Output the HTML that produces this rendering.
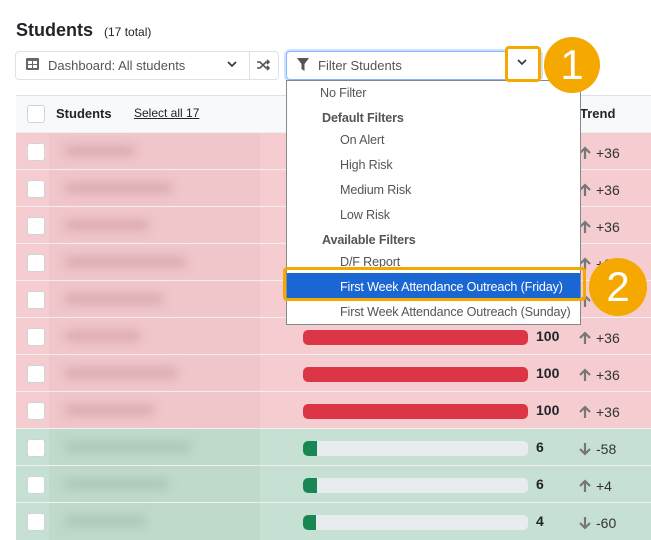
<!DOCTYPE html>
<html><head><style>
body{margin:0;width:651px;height:532px;overflow:hidden;background:#fff;font-family:"Liberation Sans",sans-serif;position:relative;color:#212529}
.a{position:absolute}
.cb{position:absolute;left:27px;width:16px;height:16px;background:#fff;border:1px solid #d0d4d8;border-radius:3px}
.row{position:absolute;left:16px;width:640px;height:36px;border-top:1px solid #f0f0f0}
.bar{position:absolute;left:303px;width:225px;height:15px;border-radius:5px;background:#e9ecef;overflow:hidden}
.sc{position:absolute;left:536px;font-weight:bold;font-size:14px}
.tr{position:absolute;left:579px;font-size:14px;color:#333}
.tr svg{vertical-align:-2px;margin-right:5px}
.it{position:absolute;font-size:12.6px;letter-spacing:-0.15px;color:#555;white-space:nowrap;line-height:16px}
</style></head><body>
<div class="a" style="left:16px;top:20px;font-size:18px;font-weight:bold">Students <span style="font-size:12px;font-weight:normal;margin-left:6px">(17 total)</span></div>
<div class="a" style="left:15px;top:51px;width:262px;height:27px;border:1px solid #dee2e6;border-radius:4px"></div>
<div class="a" style="left:249px;top:52px;width:1px;height:27px;background:#dee2e6"></div>
<svg class="a" style="left:26px;top:58px" width="13" height="12"><rect x="0" y="0" width="13" height="12" rx="1" fill="#666"/><rect x="2" y="3" width="4" height="3" fill="#fff"/><rect x="7" y="3" width="4" height="3" fill="#fff"/><rect x="2" y="7" width="4" height="3" fill="#fff"/><rect x="7" y="7" width="4" height="3" fill="#fff"/></svg>
<div class="a" style="left:48px;top:58px;font-size:13px;color:#555">Dashboard: All students</div>
<svg class="a" style="left:227px;top:61px" width="10" height="7"><path d="M1 1l4 4 4-4" stroke="#333" stroke-width="1.6" fill="none"/></svg>
<svg class="a" style="left:257px;top:59px" width="13" height="12"><path d="M0 3h3l6 6h3M0 9h3l6-6h3M10 1l2 2-2 2M10 7l2 2-2 2" stroke="#555" stroke-width="1.6" fill="none"/></svg>
<div class="a" style="left:16px;top:95px;width:640px;height:37px;background:#f8f9fa;border-top:1px solid #dee2e6"></div>
<div class="cb" style="top:105px"></div>
<div class="a" style="left:56px;top:106px;font-size:13px;font-weight:bold">Students</div>
<div class="a" style="left:134px;top:106px;font-size:12px;text-decoration:underline">Select all 17</div>
<div class="a" style="left:580px;top:106px;font-size:13px;font-weight:bold">Trend</div>
<div id="rows"></div>
<script>
var up='<svg width="12" height="14"><path d="M6 13V2M1 7L6 2l5 5" stroke="#777" stroke-width="2.2" fill="none"/></svg>';
var dn='<svg width="12" height="14"><path d="M6 1v11M1 7l5 5 5-5" stroke="#777" stroke-width="2.2" fill="none"/></svg>';
var data=[[36,'+36',1,100],[36,'+36',1,100],[36,'+36',1,100],[36,'+36',1,100],[36,'+36',1,100],[36,'+36',1,100],[36,'+36',1,100],[36,'+36',1,100],[-58,'-58',0,6],[4,'+4',0,6],[-60,'-60',0,4]];
var h='';
for(var i=0;i<data.length;i++){var t=133+i*37,d=data[i],bg=d[2]?'#f5cdd1':'#c6e1d4';
h+='<div class="row" style="top:'+(t-1)+'px;height:37px;background:'+bg+'"></div>';
h+='<div class="cb" style="top:'+(t+10)+'px"></div>';
h+='<div class="a" style="left:49px;top:'+t+'px;width:211px;height:37px;background:'+(d[2]?'#f0c6ca':'#bfd9cb')+'"></div>';
h+='<div class="a" style="left:65px;top:'+(t+13)+'px;width:'+(70+(i*37)%60)+'px;height:10px;background:'+(d[2]?'#d9a9ae':'#a8c6b6')+';filter:blur(5px)"></div>';
h+='<div class="bar" style="top:'+(t+12)+'px"><div style="height:15px;width:'+(d[3]*2.25)+'px;min-width:13px;background:'+(d[2]?'#dc3545':'#198754')+'"></div></div>';
h+='<div class="sc" style="top:'+(t+10)+'px">'+d[3]+'</div>';
h+='<div class="tr" style="top:'+(t+12)+'px">'+(d[0]>0?up:dn)+d[1]+'</div>';}
document.getElementById('rows').innerHTML=h;
</script>
<div class="a" style="left:286px;top:51px;width:253px;height:27px;border:1px solid #86b7fe;border-radius:4px;background:#fff;box-shadow:0 0 0 2px #cfe2ff"></div>
<svg class="a" style="left:297px;top:58px" width="12" height="13"><path d="M0 0h12L7.5 6v7L4.5 11V6z" fill="#555"/></svg>
<div class="a" style="left:318px;top:58px;font-size:13px;color:#555">Filter Students</div>
<div class="a" style="left:286px;top:80px;width:293px;height:243px;border:1px solid #888;background:#fff"></div>
<div class="a" style="left:287px;top:273px;width:293px;height:27px;background:#1a66d2"></div>
<div class="it" style="left:320px;top:85px">No Filter</div>
<div class="it" style="left:322px;top:110px;font-weight:bold">Default Filters</div>
<div class="it" style="left:340px;top:132px">On Alert</div>
<div class="it" style="left:340px;top:157px">High Risk</div>
<div class="it" style="left:340px;top:182px">Medium Risk</div>
<div class="it" style="left:340px;top:207px">Low Risk</div>
<div class="it" style="left:322px;top:232px;font-weight:bold">Available Filters</div>
<div class="it" style="left:340px;top:254px">D/F Report</div>
<div class="it" style="left:340px;top:279px;color:#fff">First Week Attendance Outreach (Friday)</div>
<div class="it" style="left:340px;top:304px">First Week Attendance Outreach (Sunday)</div>
<div class="a" style="left:505px;top:46px;width:30px;height:30px;border:3px solid #f5a800;border-radius:4px;background:#fff"></div>
<svg class="a" style="left:517px;top:59px" width="10" height="7"><path d="M1 1l4 4 4-4" stroke="#333" stroke-width="1.6" fill="none"/></svg>
<div class="a" style="left:283px;top:267px;width:297px;height:28px;border:3px solid #f5a800;border-radius:4px"></div>
<div class="a" style="left:544px;top:37px;width:56px;height:56px;border-radius:50%;background:#f5a800;color:#fff;font-size:42px;text-align:center;line-height:56px">1</div>
<div class="a" style="left:589px;top:258px;width:58px;height:58px;border-radius:50%;background:#f5a800;color:#fff;font-size:42px;text-align:center;line-height:58px">2</div>
</body></html>
